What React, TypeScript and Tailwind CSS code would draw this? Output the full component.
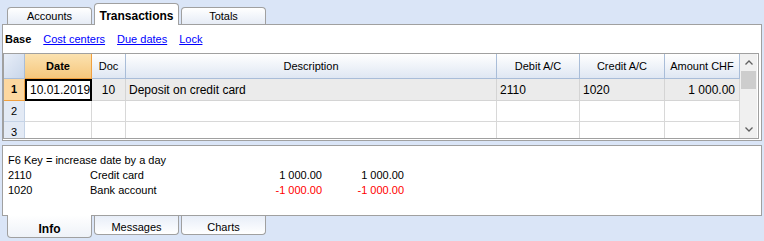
import React from "react";

const font = { fontFamily: '"Liberation Sans", Arial, sans-serif' };

const cols = "grid grid-cols-[21px_67px_34px_371px_83px_85px_75px]";

function TopTab({ label, active }: { label: string; active?: boolean }) {
    return active ? (
        <div className="relative z-10 -mb-px flex h-[22px] w-[85px] items-start justify-center rounded-t-[4px] border border-b-0 border-[#a0a0a0] bg-white pt-[3px] text-[12px] font-bold text-black">
            {label}
        </div>
    ) : (
        <div className="mt-[4px] flex h-[17px] w-[85px] items-center justify-center rounded-t-[4px] border border-b-0 border-[#a0a0a0] bg-gradient-to-b from-white to-[#e6ecf6] pt-px text-[11px] text-black">
            {label}
        </div>
    );
}

function BottomTab({ label, active }: { label: string; active?: boolean }) {
    return active ? (
        <div className="relative z-10 -mt-px flex h-[23px] w-[85px] items-end justify-center rounded-b-[4px] border border-t-0 border-[#a0a0a0] bg-gradient-to-b from-white to-[#eef2f8] text-[12px] leading-[16px] font-bold text-black">
            {label}
        </div>
    ) : (
        <div className="flex h-[19px] w-[85px] items-center justify-center rounded-b-[4px] border border-t-0 border-[#a0a0a0] bg-gradient-to-b from-[#e8eef8] to-white pt-[3px] text-[11px] leading-[14px] text-black">
            {label}
        </div>
    );
}

function HeadCell({ label, active }: { label: string; active?: boolean }) {
    return (
        <div
            className={
                active
                    ? "flex items-center justify-center border-r border-b border-[#f0a040] bg-gradient-to-b from-[#fbe2b0] to-[#f6c77c] text-[11px] font-bold"
                    : "flex items-center justify-center border-r border-b border-[#a9bdd8] bg-gradient-to-b from-white to-[#dfe7f3] px-[3px] text-[11px]"
            }
        >
            {label}
        </div>
    );
}

export default function App() {
    return (
        <div className="flex h-[241px] w-[764px] flex-col bg-[#dae5f7] text-black" style={font}>
            <div className="flex h-[24px] shrink-0 items-end gap-[2px] pl-[7px]">
                <TopTab label="Accounts" />
                <TopTab label="Transactions" active />
                <TopTab label="Totals" />
            </div>

            <div className="mx-[2px] flex h-[117px] shrink-0 flex-col border border-[#a0a0a0] bg-white">
                <div className="flex h-[28px] shrink-0 items-center gap-[12px] pl-[2px] text-[11px]">
                    <span className="font-bold">Base</span>
                    <span className="text-[#0000ff] underline">Cost centers</span>
                    <span className="text-[#0000ff] underline">Due dates</span>
                    <span className="text-[#0000ff] underline">Lock</span>
                </div>
                <div className="mr-[2px] flex h-[86px] shrink-0 overflow-hidden border border-[#a0a0a0]">
                    <div className="flex flex-col">
                        <div className={`${cols} h-[25px] shrink-0`}>
                            <div className="border-r border-b border-[#a9bdd8] bg-gradient-to-br from-[#e8eef8] to-[#c9d6ea]" />
                            <HeadCell label="Date" active />
                            <HeadCell label="Doc" />
                            <HeadCell label="Description" />
                            <HeadCell label="Debit A/C" />
                            <HeadCell label="Credit A/C" />
                            <HeadCell label="Amount CHF" />
                        </div>
                        <div className={`${cols} h-[22px] shrink-0 bg-[#ebebeb] text-[12px]`}>
                            <div className="flex items-center justify-center border-r border-b border-[#f0a040] bg-[#fcd7a0] text-[11px] font-bold">
                                1
                            </div>
                            <div className="flex items-center border-2 border-black bg-white pl-[3px]">10.01.2019</div>
                            <div className="flex items-center justify-center border-r border-b border-[#d4d4d4]">10</div>
                            <div className="flex items-center border-r border-b border-[#d4d4d4] pl-[3px]">Deposit on credit card</div>
                            <div className="flex items-center border-r border-b border-[#d4d4d4] pl-[3px]">2110</div>
                            <div className="flex items-center border-r border-b border-[#d4d4d4] pl-[3px]">1020</div>
                            <div className="flex items-center justify-end border-r border-b border-[#d4d4d4] pr-[4px]">1 000.00</div>
                        </div>
                        {["2", "3"].map((n) => (
                            <div key={n} className={`${cols} h-[21px] shrink-0 text-[12px]`}>
                                <div className="flex items-center justify-center border-r border-b border-[#c5d3e6] bg-[#e3eaf5] text-[11px]">
                                    {n}
                                </div>
                                {[0, 1, 2, 3, 4, 5].map((i) => (
                                    <div key={i} className="border-r border-b border-[#d8d8d8]" />
                                ))}
                            </div>
                        ))}
                    </div>
                    <div className="flex w-[17px] flex-col bg-[#f0f0f0]">
                        <div className="flex h-[17px] items-center justify-center">
                            <svg width="8" height="5" viewBox="0 0 8 5">
                                <path d="M0.5 4.5 L4 1 L7.5 4.5" fill="none" stroke="#606060" strokeWidth="1.3" />
                            </svg>
                        </div>
                        <div className="mx-px h-[18px] bg-[#cdcdcd]" />
                        <div className="flex-1" />
                        <div className="flex h-[17px] items-center justify-center">
                            <svg width="8" height="5" viewBox="0 0 8 5">
                                <path d="M0.5 0.5 L4 4 L7.5 0.5" fill="none" stroke="#606060" strokeWidth="1.3" />
                            </svg>
                        </div>
                    </div>
                </div>
            </div>

            <div className="mx-[2px] mt-[4px] flex h-[71px] shrink-0 flex-col border border-[#a0a0a0] bg-white pl-[5px] pt-[7px] text-[11px] leading-[15px]">
                <div>F6 Key = increase date by a day</div>
                <div className="flex">
                    <span className="w-[82px]">2110</span>
                    <span className="w-[150px]">Credit card</span>
                    <span className="w-[82px] text-right">1 000.00</span>
                    <span className="w-[82px] text-right">1 000.00</span>
                </div>
                <div className="flex">
                    <span className="w-[82px]">1020</span>
                    <span className="w-[150px]">Bank account</span>
                    <span className="w-[82px] text-right text-[#ff0000]">-1 000.00</span>
                    <span className="w-[82px] text-right text-[#ff0000]">-1 000.00</span>
                </div>
            </div>

            <div className="flex items-start gap-[2px] pl-[7px]">
                <BottomTab label="Info" active />
                <BottomTab label="Messages" />
                <BottomTab label="Charts" />
            </div>
        </div>
    );
}
